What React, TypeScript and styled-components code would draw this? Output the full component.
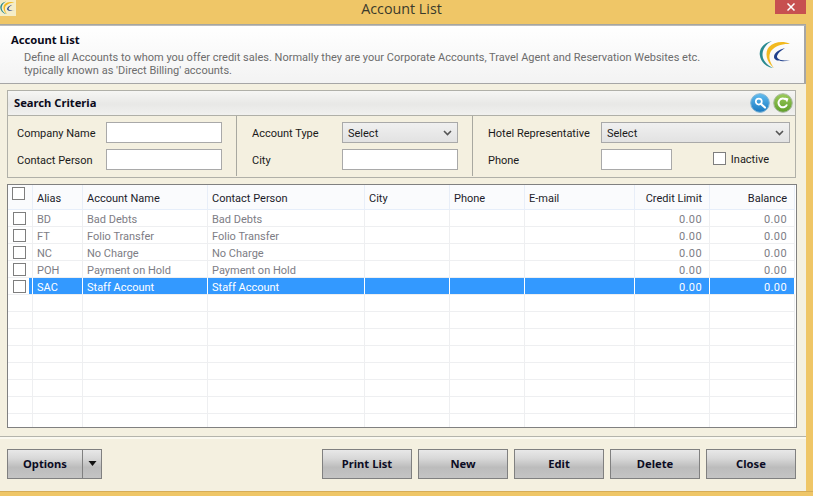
import React from "react";
import styled, { createGlobalStyle } from "styled-components";

const Global = createGlobalStyle`
  html, body { margin: 0; padding: 0; background: #efc667; }
  * { box-sizing: border-box; }
`;

const Shell = styled.div`
  width: 813px; height: 496px; overflow: hidden; background: #efc667;
  display: flex; flex-direction: column;
  font-family: Roboto, "Liberation Sans", sans-serif; font-size: 11px; color: #1a1a1a;
`;
const TitleBar = styled.div`
  height: 24px; flex: none; padding-right: 7px;
  display: grid; grid-template-columns: 1fr auto 1fr; align-items: start;
`;
const AppIcon = styled.div`
  width: 16px; height: 16px; background: #f5edc8; overflow: hidden;
`;
const TitleText = styled.div`
  font-size: 14.3px; line-height: 18px; color: #3a3a2c; margin-right: 3px;
  font-family: "Open Sans", sans-serif;
`;
const CloseBtn = styled.div`
  justify-self: end; width: 31px; height: 14px; background: #c75050;
  display: flex; align-items: center; justify-content: center;
`;
const Main = styled.div`
  flex: none; height: 467px; width: 806px; background: #f4f0e0;
  border-top: 1px solid #a6a6a0; display: flex; flex-direction: column;
`;
const Banner = styled.div`
  height: 59px; flex: none; padding: 6px 11px 0 11px; display: flex; justify-content: space-between;
  background: linear-gradient(#ffffff, #f3f3f3);
  border-top: 1px solid #bbb; border-right: 2px solid #a6a6a6; border-bottom: 1px solid #a6a6a6;
`;
const BannerText = styled.div`display: flex; flex-direction: column;`;
const BannerTitle = styled.div`
  font-family: "Noto Sans", sans-serif; font-weight: 700; font-size: 11.2px; line-height: 15px; color: #0a0a1a;
`;
const BannerDesc = styled.div`
  font-size: 11px; line-height: 13px; color: #6c6c6c; margin: 4px 0 0 13px; width: 720px;
`;
const BannerLogo = styled.div`width: 34px; height: 30px; margin-top: 8px;`;
const SearchPanel = styled.section`
  margin: 6px 10px 0 7px; height: 88px; flex: none; border: 1px solid #b0b0a8;
  display: flex; flex-direction: column;
`;
const SearchHead = styled.div`
  height: 25px; flex: none; padding: 0 2px 0 6px; display: flex; align-items: center; justify-content: space-between;
  background: linear-gradient(#f6f6f4, #e8e8e6 55%, #f1f1ef); border-bottom: 1px solid #b0b0a8;
`;
const SearchTitle = styled.div`
  font-family: "Noto Sans", sans-serif; font-weight: 700; font-size: 11.2px; color: #0a0a1a; padding-bottom: 2px;
`;
const IconRow = styled.div`display: flex; gap: 3px;`;
const SearchBody = styled.div`
  flex: 1; display: grid; grid-template-columns: 229px 236px 1fr;
`;
const SearchCol = styled.div<{ $cols: string; $last?: boolean; $pad: number }>`
  display: grid; grid-template-columns: ${(p) => p.$cols}; grid-auto-rows: 21px; row-gap: 6px;
  align-items: center; align-content: start; padding: 6px 0 0 ${(p) => p.$pad}px;
  ${(p) => (p.$last ? "" : "border-right: 1px solid #a8a8a0; margin-bottom: 1px;")}
`;
const Label = styled.div`font-size: 11px; color: #1a1a1a; white-space: nowrap; padding-top: 2px;`;
const Field = styled.div<{ $w: number }>`
  width: ${(p) => p.$w}px; height: 21px; background: #fff; border: 1px solid #a9a9a9;
`;
const Select = styled.div<{ $w: number }>`
  width: ${(p) => p.$w}px; height: 21px; border: 1px solid #a9a9a9; padding: 2px 5px 0;
  background: linear-gradient(#f0f0f0, #e2e2e2); display: flex; align-items: center; justify-content: space-between;
  font-size: 11px; color: #1a1a1a;
`;
const ChevronSvg = styled.svg`margin-top: -2px;`;
const PhoneRow = styled.div`display: flex; align-items: center; justify-content: space-between; padding-right: 26px;`;
const InactiveWrap = styled.div`display: flex; align-items: center; gap: 5px; margin-top: -2px;`;
const Check = styled.div`
  width: 13px; height: 13px; flex: none; background: #fff; border: 1px solid #7e7e7e;
`;
const Grid = styled.section`
  margin: 6px 9px 0 7px; height: 244px; flex: none; background: #fff; border: 1px solid #808080; overflow: hidden;
  padding-right: 1px;
`;
const columns = "25px 50px 125px 157px 85px 75px 110px 75px 85px";
const HeadRow = styled.div`
  display: grid; grid-template-columns: ${columns}; height: 25px; background: #fafbfd;
  border-bottom: 1px solid #e6eefa;
`;
const HeadCell = styled.div<{ $right?: boolean }>`
  display: flex; align-items: center; padding: 3px 7px 0 4px; font-size: 11px; color: #1c1c2a;
  border-right: 1px solid #e8eef8; white-space: nowrap;
  justify-content: ${(p) => (p.$right ? "flex-end" : "flex-start")};
`;
const Row = styled.div<{ $selected?: boolean }>`
  display: grid; grid-template-columns: ${columns}; height: 17px;
  border-bottom: 1px solid #eeeff1;
  background: ${(p) => (p.$selected ? "linear-gradient(to right, transparent 21px, #3399ff 21px)" : "transparent")};
  color: ${(p) => (p.$selected ? "#fff" : "#7d7d85")};
`;
const Cell = styled.div<{ $right?: boolean; $selected?: boolean }>`
  display: flex; align-items: center; padding: 2px 7px 0 4px; font-size: 11px; white-space: nowrap;
  border-right: 1px solid ${(p) => (p.$selected ? "#fff" : "#eeeff1")};
  justify-content: ${(p) => (p.$right ? "flex-end" : "flex-start")};
  ${(p) => (p.$right ? "letter-spacing: 0.4px;" : "")}
`;
const CheckCell = styled.div<{ $selected?: boolean }>`
  display: flex; align-items: center; padding-left: 5px;
  border-right: 1px solid ${(p) => (p.$selected ? "#fff" : "#eeeff1")};
`;
const HeadCheckCell = styled.div`
  display: flex; align-items: flex-start; padding: 2px 0 0 4px; border-right: 1px solid #e8eef8;
`;
const Divider = styled.div`
  flex: none; margin-top: 8px; height: 3px; border-top: 1px solid #b4b4ac; background: #fbf9f0;
`;
const Footer = styled.footer`
  flex: 1; display: flex; justify-content: space-between; padding: 10px 10px 0 7px;
`;
const BtnGroup = styled.div`display: flex; gap: 6px;`;
const SplitGroup = styled.div`display: flex;`;
const Btn = styled.button<{ $w: number; $split?: boolean }>`
  width: ${(p) => p.$w}px; height: 30px; padding: 0 0 2px; margin: 0;
  font-family: "Noto Sans", sans-serif; font-size: 11.2px; font-weight: 700;
  color: #0c0c24; border: 1px solid #808080; ${(p) => (p.$split ? "border-right: 0;" : "")}
  background: linear-gradient(#e8e8e8, #d8d8d8 30%, #bcbcbc 62%, #c4c4c4);
  display: flex; align-items: center; justify-content: center;
`;
const Bottom = styled.div`flex: 1; border-top: 1px solid #d6ad58;`;

const LogoMark = ({ w, h }: { w: number; h: number }) => (
  <svg width={w} height={h} viewBox="0 0 34 30">
    <path d="M13 1C4 3 0 9 0.8 15C1.6 22 7 27 14 28C8 25 3.5 20 3.5 15C3.5 9 7 4 13 1Z" fill="#2a8a90" />
    <path d="M31 4C24 0.5 15 2 10 7C5.5 12 7 22 15 28C10.5 22 9 16 12 11C16 6 23 3.5 31 4Z" fill="#f2b91f" />
    <path d="M26 8C20 9.5 15 13 15 17C15 21 22 22 31 20.5C23 21 17.5 19.5 18 16C19 13 22 10.5 26 8Z" fill="#1f3f8c" />
  </svg>
);

const Chevron = () => (
  <ChevronSvg width="9" height="6" viewBox="0 0 9 6">
    <path d="M1 1L4.5 4.5L8 1" fill="none" stroke="#555" strokeWidth="1.6" />
  </ChevronSvg>
);

const SearchIcon = () => (
  <svg width="20" height="20" viewBox="0 0 20 20">
    <defs>
      <linearGradient id="blueG" x1="0" y1="0" x2="0" y2="1">
        <stop offset="0" stopColor="#62bdf0" /><stop offset="1" stopColor="#1878c0" />
      </linearGradient>
    </defs>
    <circle cx="10" cy="10" r="9.3" fill="url(#blueG)" stroke="#7fb4d4" />
    <circle cx="8.8" cy="8.6" r="3" fill="none" stroke="#fff" strokeWidth="1.7" />
    <path d="M11 11L15 14.5" stroke="#fff" strokeWidth="2.2" strokeLinecap="round" />
  </svg>
);

const RefreshIcon = () => (
  <svg width="20" height="20" viewBox="0 0 20 20">
    <defs>
      <linearGradient id="greenG" x1="0" y1="0" x2="0" y2="1">
        <stop offset="0" stopColor="#9ccb5a" /><stop offset="1" stopColor="#5f9e2a" />
      </linearGradient>
    </defs>
    <circle cx="10" cy="10" r="9.3" fill="url(#greenG)" stroke="#a9b8a0" />
    <path d="M14 11.5A4.4 4.4 0 1 1 13 6.8" fill="none" stroke="#fff" strokeWidth="2" />
    <path d="M11.5 4.5L15.5 5.5L14 9.5Z" fill="#fff" />
  </svg>
);

const rows = [
  ["BD", "Bad Debts", "Bad Debts"],
  ["FT", "Folio Transfer", "Folio Transfer"],
  ["NC", "No Charge", "No Charge"],
  ["POH", "Payment on Hold", "Payment on Hold"],
  ["SAC", "Staff Account", "Staff Account"],
  ...Array.from({ length: 8 }, () => ["", "", ""]),
];

export default function App() {
  return (
    <Shell>
      <Global />
      <TitleBar>
        <AppIcon><LogoMark w={16} h={16} /></AppIcon>
        <TitleText>Account List</TitleText>
        <CloseBtn>
          <svg width="8" height="8" viewBox="0 0 8 8"><path d="M0.5 0.5L7.5 7.5M7.5 0.5L0.5 7.5" stroke="#fff" strokeWidth="1.5" /></svg>
        </CloseBtn>
      </TitleBar>
      <Main>
        <Banner>
          <BannerText>
            <BannerTitle>Account List</BannerTitle>
            <BannerDesc>
              Define all Accounts to whom you offer credit sales. Normally they are your Corporate Accounts, Travel Agent and Reservation Websites etc.
              <br />typically known as 'Direct Billing' accounts.
            </BannerDesc>
          </BannerText>
          <BannerLogo><LogoMark w={34} h={30} /></BannerLogo>
        </Banner>
        <SearchPanel>
          <SearchHead>
            <SearchTitle>Search Criteria</SearchTitle>
            <IconRow><SearchIcon /><RefreshIcon /></IconRow>
          </SearchHead>
          <SearchBody>
            <SearchCol $cols="89px 116px" $pad={9}>
              <Label>Company Name</Label><Field $w={116} />
              <Label>Contact Person</Label><Field $w={116} />
            </SearchCol>
            <SearchCol $cols="90px 116px" $pad={15}>
              <Label>Account Type</Label><Select $w={116}>Select<Chevron /></Select>
              <Label>City</Label><Field $w={116} />
            </SearchCol>
            <SearchCol $cols="113px 1fr" $pad={15} $last>
              <Label>Hotel Representative</Label><Select $w={189}>Select<Chevron /></Select>
              <Label>Phone</Label>
              <PhoneRow>
                <Field $w={71} />
                <InactiveWrap><Check /><Label>Inactive</Label></InactiveWrap>
              </PhoneRow>
            </SearchCol>
          </SearchBody>
        </SearchPanel>
        <Grid>
          <HeadRow>
            <HeadCheckCell><Check /></HeadCheckCell>
            <HeadCell>Alias</HeadCell>
            <HeadCell>Account Name</HeadCell>
            <HeadCell>Contact Person</HeadCell>
            <HeadCell>City</HeadCell>
            <HeadCell>Phone</HeadCell>
            <HeadCell>E-mail</HeadCell>
            <HeadCell $right>Credit Limit</HeadCell>
            <HeadCell $right>Balance</HeadCell>
          </HeadRow>
          {rows.map((r, i) => {
            const sel = r[0] === "SAC";
            const filled = r[0] !== "";
            return (
              <Row key={i} $selected={sel}>
                <CheckCell $selected={sel}>{filled && <Check />}</CheckCell>
                <Cell $selected={sel}>{r[0]}</Cell>
                <Cell $selected={sel}>{r[1]}</Cell>
                <Cell $selected={sel}>{r[2]}</Cell>
                <Cell $selected={sel} />
                <Cell $selected={sel} />
                <Cell $selected={sel} />
                <Cell $selected={sel} $right>{filled ? "0.00" : ""}</Cell>
                <Cell $selected={sel} $right>{filled ? "0.00" : ""}</Cell>
              </Row>
            );
          })}
        </Grid>
        <Divider />
        <Footer>
          <SplitGroup>
            <Btn $w={75} $split>Options</Btn>
            <Btn $w={20} aria-label="More options">
              <svg width="9" height="5" viewBox="0 0 9 5"><path d="M0.5 0H8.5L4.5 5Z" fill="#111" /></svg>
            </Btn>
          </SplitGroup>
          <BtnGroup>
            <Btn $w={90}>Print List</Btn>
            <Btn $w={90}>New</Btn>
            <Btn $w={90}>Edit</Btn>
            <Btn $w={90}>Delete</Btn>
            <Btn $w={90}>Close</Btn>
          </BtnGroup>
        </Footer>
      </Main>
      <Bottom />
    </Shell>
  );
}
